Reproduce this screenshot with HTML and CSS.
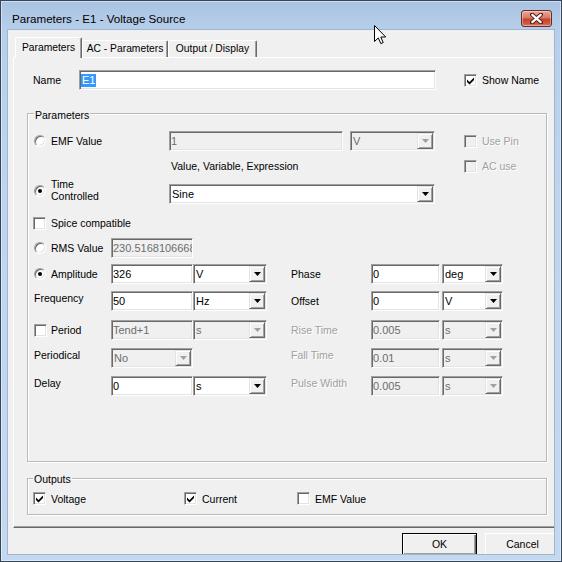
FILE: index.html
```html
<!DOCTYPE html>
<html>
<head>
<meta charset="utf-8">
<title>Parameters - E1 - Voltage Source</title>
<link rel="stylesheet" href="styles.css">
</head>
<body>
<div class="window">
  <div class="titlebar">
    <span class="title">Parameters - E1 - Voltage Source</span>
    <div class="close">
      <svg width="13" height="11" viewBox="0 0 13 11"><path d="M2 1.5 L11 9.5 M11 1.5 L2 9.5" stroke="#4a1a14" stroke-width="4" stroke-linecap="round"/><path d="M2.3 1.8 L10.7 9.2 M10.7 1.8 L2.3 9.2" stroke="#fff" stroke-width="2.2" stroke-linecap="round"/></svg>
    </div>
  </div>
  <div class="client">
    <div class="tabs">
      <div class="tab active w67">Parameters</div>
      <div class="tab w86">AC - Parameters</div>
      <div class="tab w89">Output / Display</div>
    </div>
    <div class="panel">
      <div class="name-row">
        <span class="name-label">Name</span>
        <div class="field w357"><span class="sel">E1</span></div>
        <div class="chk ml28"><span class="cb"><svg width="9" height="9" viewBox="0 0 9 9"><path d="M1 3.5 L3.5 6 L8 1.5 L8 4 L3.5 8.5 L1 6Z"/></svg></span><span>Show Name</span></div>
      </div>

      <div class="group params">
        <div class="gtitle gt-params">Parameters</div>

        <div class="row r1">
          <div class="lead"><span class="radio"></span><span>EMF Value</span></div>
          <div class="field dis w174">1</div>
          <div class="combo dis w85 ml7"><span class="ctext">V</span><span class="cbtn"><svg width="7" height="4" viewBox="0 0 7 4"><path d="M0 0H7L3.5 4Z"/></svg></span></div>
          <div class="chk dis ml29"><span class="cb"></span><span class="dtext">Use Pin</span></div>
        </div>

        <div class="row r2">
          <div class="caption">Value, Variable, Expression</div>
          <div class="chk dis"><span class="cb"></span><span class="dtext">AC use</span></div>
        </div>

        <div class="row r3">
          <div class="lead top"><span class="radio on"></span><span class="two">Time<br>Controlled</span></div>
          <div class="combo w266 bottom"><span class="ctext">Sine</span><span class="cbtn"><svg width="7" height="4" viewBox="0 0 7 4"><path d="M0 0H7L3.5 4Z"/></svg></span></div>
        </div>

        <div class="row r4">
          <div class="chk"><span class="cb"></span><span>Spice compatible</span></div>
        </div>

        <div class="row r5">
          <div class="lead2"><span class="radio"></span><span>RMS Value</span></div>
          <div class="field dis w82">230.516810666868</div>
        </div>

        <div class="row r6">
          <div class="lead2"><span class="radio on"></span><span>Amplitude</span></div>
          <div class="field w82">326</div>
          <div class="combo w74"><span class="ctext">V</span><span class="cbtn"><svg width="7" height="4" viewBox="0 0 7 4"><path d="M0 0H7L3.5 4Z"/></svg></span></div>
          <div class="rlabel">Phase</div>
          <div class="field w69">0</div>
          <div class="combo w61 ml2"><span class="ctext">deg</span><span class="cbtn"><svg width="7" height="4" viewBox="0 0 7 4"><path d="M0 0H7L3.5 4Z"/></svg></span></div>
        </div>

        <div class="row r7">
          <div class="lead2 up"><span>Frequency</span></div>
          <div class="field w82">50</div>
          <div class="combo w74"><span class="ctext">Hz</span><span class="cbtn"><svg width="7" height="4" viewBox="0 0 7 4"><path d="M0 0H7L3.5 4Z"/></svg></span></div>
          <div class="rlabel up1">Offset</div>
          <div class="field w69">0</div>
          <div class="combo w61 ml2"><span class="ctext">V</span><span class="cbtn"><svg width="7" height="4" viewBox="0 0 7 4"><path d="M0 0H7L3.5 4Z"/></svg></span></div>
        </div>

        <div class="row r8">
          <div class="lead2"><span class="cb"></span><span>Period</span></div>
          <div class="field dis w82">Tend+1</div>
          <div class="combo dis w74"><span class="ctext">s</span><span class="cbtn"><svg width="7" height="4" viewBox="0 0 7 4"><path d="M0 0H7L3.5 4Z"/></svg></span></div>
          <div class="rlabel dtext">Rise Time</div>
          <div class="field dis w69">0.005</div>
          <div class="combo dis w61 ml2"><span class="ctext">s</span><span class="cbtn"><svg width="7" height="4" viewBox="0 0 7 4"><path d="M0 0H7L3.5 4Z"/></svg></span></div>
        </div>

        <div class="row r9">
          <div class="lead2 up"><span>Periodical</span></div>
          <div class="combo dis w82"><span class="ctext">No</span><span class="cbtn"><svg width="7" height="4" viewBox="0 0 7 4"><path d="M0 0H7L3.5 4Z"/></svg></span></div>
          <div class="spacer w74"></div>
          <div class="rlabel dtext up">Fall Time</div>
          <div class="field dis w69">0.01</div>
          <div class="combo dis w61 ml2"><span class="ctext">s</span><span class="cbtn"><svg width="7" height="4" viewBox="0 0 7 4"><path d="M0 0H7L3.5 4Z"/></svg></span></div>
        </div>

        <div class="row r10">
          <div class="lead2 up"><span>Delay</span></div>
          <div class="field w82">0</div>
          <div class="combo w74"><span class="ctext">s</span><span class="cbtn"><svg width="7" height="4" viewBox="0 0 7 4"><path d="M0 0H7L3.5 4Z"/></svg></span></div>
          <div class="rlabel dtext up">Pulse Width</div>
          <div class="field dis w69">0.005</div>
          <div class="combo dis w61 ml2"><span class="ctext">s</span><span class="cbtn"><svg width="7" height="4" viewBox="0 0 7 4"><path d="M0 0H7L3.5 4Z"/></svg></span></div>
        </div>
      </div>

      <div class="group outputs">
        <div class="gtitle gt-out">Outputs</div>
        <div class="row orow">
          <div class="chk oi1"><span class="cb"><svg width="9" height="9" viewBox="0 0 9 9"><path d="M1 3.5 L3.5 6 L8 1.5 L8 4 L3.5 8.5 L1 6Z"/></svg></span><span>Voltage</span></div>
          <div class="chk oi2"><span class="cb"><svg width="9" height="9" viewBox="0 0 9 9"><path d="M1 3.5 L3.5 6 L8 1.5 L8 4 L3.5 8.5 L1 6Z"/></svg></span><span>Current</span></div>
          <div class="chk"><span class="cb"></span><span>EMF Value</span></div>
        </div>
      </div>
    </div>
    <div class="buttons">
      <div class="btn default">OK</div>
      <div class="btn">Cancel</div>
    </div>
  </div>
  <svg class="cursor" width="13" height="20" viewBox="0 0 13 20"><path d="M0.5 0.5 L0.5 16.5 L4.3 12.9 L6.8 18.6 L9.2 17.6 L6.8 12 L11.7 12 Z" fill="#fff" stroke="#000" stroke-width="1" stroke-linejoin="miter"/></svg>
</div>
</body>
</html>
```

FILE: styles.css
```css
* { box-sizing: border-box; }
html, body { margin: 0; padding: 0; }
body {
  width: 562px;
  height: 562px;
  overflow: hidden;
  font-family: "Liberation Sans", Arial, sans-serif;
  font-size: 10.5px;
  color: #000;
  background: #b9d1ea;
}

/* window frame */
.window {
  position: relative;
  width: 562px;
  height: 562px;
  border: 1px solid #34455c;
  background: linear-gradient(180deg, #a9c3e2 0px, #b7cfea 30px, #bfd5ee 200px, #c4d9f0 100%);
  padding: 0 7px 7px 7px;
  display: flex;
  flex-direction: column;
  box-shadow: inset 0 0 0 1px rgba(255,255,255,0.45);
}
.titlebar {
  height: 29px;
  flex: none;
  display: flex;
  justify-content: space-between;
  align-items: flex-start;
  padding: 0 2px 0 4px;
}
.title {
  margin-top: 11px;
  font-size: 11.6px;
  line-height: 14px;
  color: #000;
}
.close {
  margin-top: 9px;
  width: 31px;
  height: 17px;
  border: 1px solid #6b2b24;
  border-radius: 3px;
  background: linear-gradient(180deg, #e9a99b 0%, #d77a68 45%, #c5432f 55%, #cf5a43 85%, #d9826e 100%);
  box-shadow: inset 0 0 0 1px rgba(255,255,255,0.35);
  display: flex;
  align-items: center;
  justify-content: center;
}
.cursor {
  position: absolute;
  left: 373px;
  top: 24px;
}

/* client area */
.client {
  flex: 1;
  background: #f0f0f0;
  overflow: hidden;
  box-shadow: 0 0 0 1px #9fb6d2;
}

/* tabs */
.tabs {
  position: relative;
  z-index: 1;
  display: flex;
  align-items: flex-end;
  height: 20px;
  margin-top: 7px;
  padding-left: 7px;
}
.tab {
  height: 17px;
  border: 1px solid;
  border-bottom: none;
  border-color: #fff #696969 transparent #fff;
  border-radius: 2px 2px 0 0;
  box-shadow: inset -1px 0 0 #a0a0a0;
  text-align: center;
  line-height: 16px;
  font-size: 10.3px;
  background: #f0f0f0;
}
.tab.active {
  height: 21px;
  margin-bottom: -1px;
  line-height: 19px;
}
.w67 { width: 67px; }
.w86 { width: 86px; }
.w89 { width: 89px; }

.panel {
  margin-left: 5px;
  width: 560px;
  height: 471px;
  border: 1px solid;
  border-color: #fff #696969 #696969 #fff;
  box-shadow: inset -1px -1px 0 #a0a0a0;
}

/* name row */
.name-row {
  display: flex;
  align-items: center;
  height: 20px;
  margin-top: 12px;
}
.name-label {
  width: 46px;
  margin-left: 19px;
}
.w357 { width: 357px; }
.sel {
  display: inline-block;
  background: #3399ff;
  color: #fff;
  line-height: 13px;
  padding: 0 1px;
}

/* generic controls */
.field {
  height: 20px;
  border: 1px solid;
  border-color: #a0a0a0 #fff #fff #a0a0a0;
  box-shadow: inset 1px 1px 0 #696969, inset -1px -1px 0 #e3e3e3;
  background: #fff;
  padding-left: 1px;
  line-height: 18px;
  font-size: 11px;
  white-space: nowrap;
  overflow: hidden;
  flex: none;
}
.field.dis { background: #f0f0f0; color: #6d6d6d; }

.combo {
  height: 20px;
  border: 1px solid;
  border-color: #a0a0a0 #fff #fff #a0a0a0;
  box-shadow: inset 1px 1px 0 #696969, inset -1px -1px 0 #e3e3e3;
  background: #fff;
  padding: 1px 1px 1px 0;
  display: flex;
  flex: none;
  font-size: 11px;
}
.combo.dis { background: #f0f0f0; color: #6d6d6d; }
.ctext {
  flex: 1;
  padding-left: 2px;
  line-height: 17px;
  white-space: nowrap;
  overflow: hidden;
}
.cbtn {
  width: 16px;
  height: 16px;
  flex: none;
  background: #f0f0f0;
  border: 1px solid;
  border-color: #e3e3e3 #696969 #696969 #e3e3e3;
  box-shadow: inset 1px 1px 0 #fff, inset -1px -1px 0 #a0a0a0;
  display: flex;
  align-items: center;
  justify-content: center;
}
.cbtn svg { fill: #000; display: block; }
.combo.dis .cbtn svg { fill: #a0a0a0; }

.cb {
  width: 13px;
  height: 13px;
  flex: none;
  border: 1px solid;
  border-color: #a0a0a0 #fff #fff #a0a0a0;
  box-shadow: inset 1px 1px 0 #696969, inset -1px -1px 0 #e3e3e3;
  background: #fff;
  display: flex;
  align-items: center;
  justify-content: center;
  margin-right: 5px;
}
.cb svg { fill: #000; display: block; }
.chk.dis .cb { background: #f0f0f0; }
.chk { display: flex; align-items: center; }

.radio {
  width: 12px;
  height: 12px;
  flex: none;
  border-radius: 50%;
  border: 1px solid;
  border-color: #a0a0a0 #fff #fff #a0a0a0;
  box-shadow: inset 1px 1px 0 #696969, inset -1px -1px 0 #e3e3e3;
  background: #fff;
  margin-right: 5px;
  display: flex;
  align-items: center;
  justify-content: center;
}
.radio.on::after {
  content: "";
  width: 4px;
  height: 4px;
  border-radius: 50%;
  background: #000;
}

.dtext {
  color: #a0a0a0;
  text-shadow: 1px 1px 0 #fff;
}

/* group boxes */
.group {
  margin-left: 13px;
  width: 520px;
  border: 1px solid #b9b9b9;
  box-shadow: inset 1px 1px 0 #fff, 1px 1px 0 #fff;
}
.params {
  margin-top: 23px;
  height: 349px;
}
.outputs {
  margin-top: 16px;
  height: 37px;
}
.gtitle {
  display: table;
  height: 14px;
  line-height: 14px;
  padding: 0 1px;
  background: #f0f0f0;
}
.gt-params { margin: -6px 0 -8px 6px; }
.gt-out { margin: -7px 0 -7px 5px; }

.row {
  display: flex;
  align-items: center;
  height: 20px;
  padding-left: 6px;
}
.r1 { margin-top: 17px; }
.r2 { margin-top: 7px; height: 16px; }
.r3 { margin-top: 5px; height: 25px; align-items: flex-start; }
.r4 { margin-top: 9px; padding-left: 5px; }
.r5 { margin-top: 5px; }
.r6 { margin-top: 6px; }
.r7 { margin-top: 7px; }
.r8 { margin-top: 9px; }
.r9 { margin-top: 8px; }
.r10 { margin-top: 8px; }

.lead {
  width: 135px;
  flex: none;
  display: flex;
  align-items: center;
}
.lead.top { align-items: flex-start; }
.lead.top .radio { margin-top: 6px; }
.two { line-height: 12px; margin-top: -1px; }
.bottom { align-self: flex-end; }
.lead2 {
  width: 77px;
  flex: none;
  display: flex;
  align-items: center;
}
.lead2 .cb { margin-right: 4px; }
.up { margin-bottom: 6px; }
.up1 { margin-bottom: 1px; }
.rlabel {
  width: 80px;
  flex: none;
  margin-left: 24px;
  white-space: nowrap;
}
.caption {
  width: 430px;
  flex: none;
  padding-left: 137px;
}
.spacer { flex: none; height: 1px; }

.w174 { width: 174px; }
.w85 { width: 85px; }
.w266 { width: 266px; }
.w82 { width: 82px; }
.w74 { width: 74px; }
.w69 { width: 69px; }
.w61 { width: 61px; }
.ml7 { margin-left: 7px; }
.ml29 { margin-left: 29px; }
.ml28 { margin-left: 28px; }
.ml2 { margin-left: 2px; }

.orow {
  margin-top: 13px;
  height: 13px;
  padding-left: 5px;
}
.oi1 { width: 151px; flex: none; }
.oi2 { width: 113px; flex: none; }

/* buttons */
.buttons {
  display: flex;
  gap: 8px;
  padding-left: 394px;
  margin-top: 5px;
}
.btn {
  width: 75px;
  height: 23px;
  flex: none;
  text-align: center;
  line-height: 20px;
  background: #f0f0f0;
  border: 1px solid;
  border-color: #fff #696969 #696969 #fff;
  box-shadow: inset -1px -1px 0 #a0a0a0;
}
.btn.default {
  border: 1px solid #000;
  box-shadow: inset 1px 1px 0 #fff, inset -1px -1px 0 #696969, inset -2px -2px 0 #a0a0a0;
}
```
